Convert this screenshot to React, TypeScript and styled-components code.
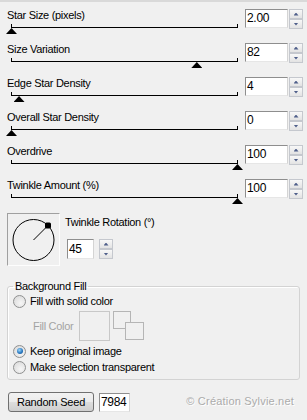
import React from 'react';
import styled, { createGlobalStyle } from 'styled-components';

const GlobalStyle = createGlobalStyle`
  body {
    margin: 0;
    background: #f0f0f0;
    font-family: "Liberation Sans", Arial, sans-serif;
    font-size: 11px;
    color: #000;
  }
`;

const Panel = styled.div`
  width: 307px;
  height: 420px;
  box-sizing: border-box;
  border-top: 2px solid #d9d9d9;
  padding: 7px 4px 0 7px;
`;

const SliderRow = styled.div`
  display: grid;
  grid-template-columns: 1fr 43px 14px;
  column-gap: 1px;
  height: 34px;
`;

const Label = styled.div`
  line-height: 13px;
  letter-spacing: -0.3px;
  white-space: nowrap;
`;

const Track = styled.div`
  position: relative;
  margin: 2px 0 0 4px;
  width: 225px;
  height: 3px;
  border: 1px solid #000;
  border-top: none;
`;

const Thumb = styled.div`
  position: absolute;
  top: 4px;
  width: 11px;
  height: 6px;
  background: #000;
  clip-path: polygon(50% 0, 100% 100%, 0 100%);
`;

const Field = styled.div<{ $w: number; $h?: number }>`
  box-sizing: border-box;
  width: ${p => p.$w}px;
  height: ${p => p.$h ?? 19}px;
  border: 1px solid;
  border-color: #8e8e8e #d4d4d4 #e6e6e6 #8e8e8e;
  background: #fff;
  font-size: 12px;
  line-height: ${p => (p.$h ?? 19) - 2}px;
  padding-left: 1px;
  letter-spacing: -0.3px;
`;

const SeedField = styled(Field)`
  margin: 1px 0 0 5px;
`;

const Spin = styled.div`
  display: flex;
  flex-direction: column;
  width: 14px;
  height: 20px;
`;

const SpinButton = styled.div<{ $down?: boolean }>`
  flex: 1;
  box-sizing: border-box;
  border: 1px solid #c5c8ce;
  background: linear-gradient(#f8f8f8, #e3e3e3);
  display: flex;
  align-items: center;
  justify-content: center;

  &::after {
    content: '';
    width: 5px;
    height: 3px;
    background: #4f5f8a;
    clip-path: ${p =>
      p.$down ? 'polygon(0 0, 100% 0, 50% 100%)' : 'polygon(50% 0, 100% 100%, 0 100%)'};
  }
`;

const DialRow = styled.div`
  display: flex;
  height: 67px;
`;

const DialBox = styled.div`
  box-sizing: border-box;
  width: 53px;
  height: 53px;
  border: 1px solid;
  border-color: #a0a0a0 #fdfdfd #fdfdfd #a0a0a0;
`;

const RotationCol = styled.div`
  margin-left: 5px;
  padding-top: 3px;
`;

const RotationControls = styled.div`
  display: flex;
  gap: 5px;
  margin: 10px 0 0 2px;
`;

const Group = styled.fieldset`
  box-sizing: border-box;
  width: 293px;
  margin: 0;
  padding: 1px 0 4px 5px;
  border: 1px solid #d3d3d3;
  border-radius: 3px;
  box-shadow: inset 1px 1px 0 #fff;
`;

const Legend = styled.legend`
  padding: 0 2px;
  line-height: 13px;
  letter-spacing: -0.3px;
`;

const RadioRow = styled.div<{ $h: number; $top?: number }>`
  display: flex;
  align-items: center;
  gap: 4px;
  height: ${p => p.$h}px;
  margin-top: ${p => p.$top ?? 0}px;
  letter-spacing: -0.3px;
`;

const Radio = styled.span<{ $checked?: boolean }>`
  position: relative;
  box-sizing: border-box;
  width: 13px;
  height: 13px;
  border-radius: 50%;
  border: 1px solid #8f9090;
  background: radial-gradient(circle at 60% 65%, #f6f6f6, #d6d6d6);

  &::after {
    content: '';
    display: ${p => (p.$checked ? 'block' : 'none')};
    position: absolute;
    left: 2.5px;
    top: 2.5px;
    width: 6px;
    height: 6px;
    border-radius: 50%;
    background: radial-gradient(circle at 40% 35%, #9fd8fa, #2b7ac2 55%, #0f4a8c);
  }
`;

const FillRow = styled.div`
  display: flex;
  align-items: center;
  height: 30px;
  margin: 3px 0 0 20px;
`;

const Disabled = styled.span`
  color: #a3a3a3;
  letter-spacing: -0.3px;
`;

const Swatch = styled.div`
  box-sizing: border-box;
  width: 31px;
  height: 30px;
  margin-left: 6px;
  border: 1px solid #c8c8c8;
`;

const SwapSvg = styled.svg`
  margin-left: 3px;
`;

const BottomRow = styled.div`
  display: flex;
  margin-top: 12px;
  padding-left: 1px;
`;

const SeedButton = styled.button`
  box-sizing: border-box;
  width: 86px;
  height: 20px;
  padding: 0;
  border: 1px solid #707070;
  border-radius: 3px;
  background: linear-gradient(#f2f2f2 0%, #ebebeb 50%, #dddddd 51%, #cfcfcf 100%);
  font-family: inherit;
  font-size: 11px;
  letter-spacing: -0.2px;
  color: #000;
`;

const Credit = styled.div`
  margin: 3px 9px 0 auto;
  color: #ababab;
  font-size: 11px;
  letter-spacing: 0.2px;
  line-height: 13px;
  text-shadow: 1px 1px 0 #fff;
`;

type SliderProps = { label: string; value: string; min: number; max: number };

const sliders: SliderProps[] = [
  { label: 'Star Size (pixels)', value: '2.00', min: 2, max: 100 },
  { label: 'Size Variation', value: '82', min: 0, max: 100 },
  { label: 'Edge Star Density', value: '4', min: 0, max: 120 },
  { label: 'Overall Star Density', value: '0', min: 0, max: 100 },
  { label: 'Overdrive', value: '100', min: 0, max: 100 },
  { label: 'Twinkle Amount (%)', value: '100', min: 0, max: 100 },
];

const Spinner = () => (
  <Spin>
    <SpinButton />
    <SpinButton $down />
  </Spin>
);

const Slider = ({ label, value, min, max }: SliderProps) => {
  const pos = (parseFloat(value) - min) / (max - min);
  return (
    <SliderRow>
      <div>
        <Label>{label}</Label>
        <Track>
          <Thumb style={{ left: pos * 226 - 6 }} />
        </Track>
      </div>
      <Field $w={43}>{value}</Field>
      <Spinner />
    </SliderRow>
  );
};

const Dial = () => (
  <DialBox>
    <svg width="51" height="51" viewBox="0 0 51 51">
      <circle cx="25.5" cy="26" r="20.5" fill="none" stroke="#000" strokeWidth="1" />
      <line x1="25.5" y1="26" x2="40" y2="11.5" stroke="#000" strokeWidth="1" />
      <rect x="37" y="8.5" width="6" height="6" rx="1.5" fill="#000" />
    </svg>
  </DialBox>
);

const SwapIcon = () => (
  <SwapSvg width="32" height="30" viewBox="0 0 32 30">
    <rect x="0.5" y="0.5" width="17" height="17" fill="none" stroke="#b5b5b5" />
    <rect x="12.5" y="11.5" width="18" height="17" fill="#f0f0f0" stroke="#b5b5b5" />
  </SwapSvg>
);

export default function App() {
  return (
    <>
      <GlobalStyle />
      <Panel>
        {sliders.map(s => (
          <Slider key={s.label} {...s} />
        ))}

        <DialRow>
          <Dial />
          <RotationCol>
            <Label>Twinkle Rotation (°)</Label>
            <RotationControls>
              <Field $w={27} $h={20}>45</Field>
              <Spinner />
            </RotationControls>
          </RotationCol>
        </DialRow>

        <Group>
          <Legend>Background Fill</Legend>
          <RadioRow $h={14}>
            <Radio />
            Fill with solid color
          </RadioRow>
          <FillRow>
            <Disabled>Fill Color</Disabled>
            <Swatch />
            <SwapIcon />
          </FillRow>
          <RadioRow $h={16} $top={2}>
            <Radio $checked />
            Keep original image
          </RadioRow>
          <RadioRow $h={16}>
            <Radio />
            Make selection transparent
          </RadioRow>
        </Group>

        <BottomRow>
          <SeedButton>Random Seed</SeedButton>
          <SeedField $w={31}>7984</SeedField>
          <Credit>© Création Sylvie.net</Credit>
        </BottomRow>
      </Panel>
    </>
  );
}
